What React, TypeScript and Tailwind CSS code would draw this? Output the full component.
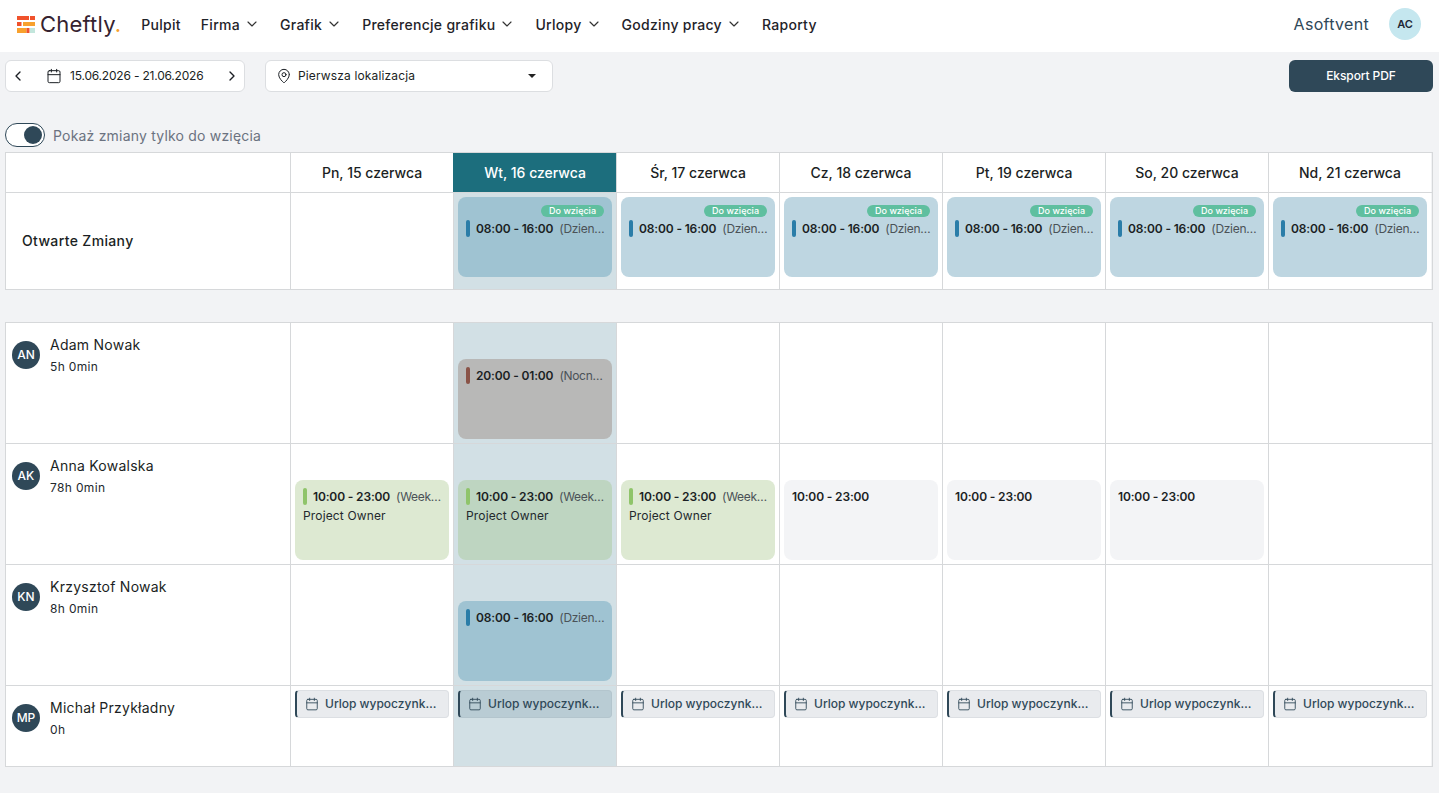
import { Calendar, ChevronDown, ChevronLeft, ChevronRight, MapPin } from 'lucide-react';
import type { ReactNode } from 'react';

const days = ['Pn, 15 czerwca', 'Wt, 16 czerwca', 'Śr, 17 czerwca', 'Cz, 18 czerwca', 'Pt, 19 czerwca', 'So, 20 czerwca', 'Nd, 21 czerwca'];

function NavItem({ label, menu }: { label: string; menu?: boolean }) {
  return (
    <div className="flex items-center gap-1 text-[14px] font-medium text-[#1f2329] tracking-[0.28px] whitespace-nowrap">
      {label}
      {menu && <ChevronDown className="w-4 h-4 text-[#333]" strokeWidth={1.75} />}
    </div>
  );
}

function Logo() {
  return (
    <svg width="18" height="17" viewBox="0 0 18 17" className="shrink-0">
      <rect x="0" y="0" width="12" height="4" fill="#f0522c" />
      <rect x="13" y="0" width="5" height="4" fill="#f0522c" />
      <rect x="0" y="6" width="4.5" height="4" fill="#f0522c" />
      <rect x="6" y="6" width="12" height="4" fill="#f8a12d" />
      <rect x="0" y="12" width="9.5" height="5" fill="#f8a12d" />
      <rect x="9.5" y="12" width="3" height="5" fill="#f0522c" />
      <rect x="13" y="12" width="5" height="5" fill="#c3e6dc" />
    </svg>
  );
}

// kafelek zmiany w siatce
function Shift({ time, tag, role, bar, bg, badge }: { time: string; tag?: string; role?: string; bar?: string; bg: string; badge?: boolean }) {
  return (
    <div className={`${bg} h-[80px] rounded-lg px-2 pt-[8px] flex flex-col`}>
      {badge && (
        <div className="self-end h-3 mb-[3px] px-2 rounded-full bg-[#5fbf9f] text-white text-[9px] leading-3 font-medium whitespace-nowrap">Do wzięcia</div>
      )}
      <div className="flex items-center h-[17px] text-[12px]">
        {bar && <span className={`w-1 h-[17px] rounded-sm ${bar} mr-[6px] shrink-0`} />}
        <span className="font-semibold text-[#1b1f24] whitespace-nowrap tracking-[-0.15px]">{time}</span>
        {tag && <span className="ml-[6px] text-[#4b5257] whitespace-nowrap tracking-[-0.3px]">{tag}</span>}
      </div>
      {role && <div className="mt-[2px] text-[12px] leading-[17px] tracking-[0.15px] text-[#23282d]">{role}</div>}
    </div>
  );
}

function Leave({ today }: { today?: boolean }) {
  return (
    <div className={`h-7 flex items-center gap-[6px] pl-[8px] pr-2 rounded border border-l-2 border-l-[#2f4858] ${today ? 'bg-[#b9ccd4] border-[#b3c5cd]' : 'bg-[#e9ebee] border-[#dcdfe3]'}`}>
      <Calendar className="w-[14px] h-[14px] text-[#2f4858] shrink-0" strokeWidth={1.5} />
      <span className="text-[12px] font-medium text-[#2f4858] whitespace-nowrap">Urlop wypoczynk…</span>
    </div>
  );
}

function Cell({ today, children }: { today?: boolean; children?: ReactNode }) {
  return <div className={`border-l border-[#d6d8da] p-1 ${today ? 'bg-[#d2e0e5]' : 'bg-white'}`}>{children}</div>;
}

function Person({ initials, name, hours }: { initials: string; name: string; hours: string }) {
  return (
    <div className="flex items-start gap-[10px] pl-[6px] pt-[11px] bg-white">
      <div className="w-7 h-7 mt-[7px] rounded-full bg-[#2f4858] text-white text-[12px] font-medium flex items-center justify-center shrink-0">{initials}</div>
      <div>
        <div className="text-[14px] leading-[21px] tracking-[0.25px] text-[#1b1f24]">{name}</div>
        <div className="mt-[3px] text-[12px] leading-[18px] tracking-[0.35px] text-[#23282d]">{hours}</div>
      </div>
    </div>
  );
}

const rowGrid = 'grid grid-cols-[284px_repeat(7,163px)]';

export default function App() {
  const open = { time: '08:00 - 16:00', tag: '(Dzien…', bar: 'bg-[#2a7da8]', badge: true };
  const week = { time: '10:00 - 23:00', tag: '(Week…', role: 'Project Owner', bar: 'bg-[#8fc46a]' };

  return (
    <div className="font-['Inter','Noto_Sans',sans-serif] min-h-[793px] bg-[#f2f3f5] text-[#1b1f24]">
      <header className="h-[52px] bg-white flex items-center justify-between pl-[17px] pr-[18px] pb-1">
        <div className="flex items-center">
          <Logo />
          <span className="ml-[5px] text-[22px] tracking-[0.2px] text-[#35222f] leading-none">Cheftly<span className="text-[#f8a12d]">.</span></span>
          <nav className="flex items-center gap-[20px] ml-[20px]">
            <NavItem label="Pulpit" />
            <NavItem label="Firma" menu />
            <NavItem label="Grafik" menu />
            <NavItem label="Preferencje grafiku" menu />
            <NavItem label="Urlopy" menu />
            <NavItem label="Godziny pracy" menu />
            <NavItem label="Raporty" />
          </nav>
        </div>
        <div className="flex items-center gap-5">
          <span className="text-[16px] tracking-[0.3px] text-[#2f4858]">Asoftvent</span>
          <div className="w-8 h-8 rounded-full bg-[#c5e7ef] flex items-center justify-center text-[11px] font-semibold text-[#1f2937]">AC</div>
        </div>
      </header>

      <div className="flex items-center justify-between pl-[5px] pr-[6px] pt-2">
        <div className="flex items-center gap-5">
          <div className="w-[240px] h-8 flex items-center bg-white border border-[#dcdee1] rounded-md px-1 text-[12px]">
            <ChevronLeft className="w-4 h-4" strokeWidth={2} />
            <Calendar className="w-4 h-4 ml-5" strokeWidth={1.5} />
            <span className="ml-2 tracking-[-0.2px] whitespace-nowrap">15.06.2026 - 21.06.2026</span>
            <ChevronRight className="w-4 h-4 ml-auto" strokeWidth={2} />
          </div>
          <div className="w-[288px] h-8 flex items-center bg-white border border-[#dcdee1] rounded-md pl-[10px] pr-4 text-[12px]">
            <MapPin className="w-4 h-4" strokeWidth={1.5} />
            <span className="ml-[6px] tracking-[0.15px]">Pierwsza lokalizacja</span>
            <span className="ml-auto w-0 h-0 border-x-[4px] border-x-transparent border-t-[4px] border-t-[#222]" />
          </div>
        </div>
        <button className="w-[144px] h-8 rounded-md bg-[#2f4858] text-white text-[12px] font-medium tracking-[-0.1px]">Eksport PDF</button>
      </div>

      <div className="flex items-center gap-2 pl-[5px] mt-[31px] h-6">
        <div className="w-10 h-6 rounded-full bg-white border border-[#2f4858] flex items-center justify-end pr-[2px]">
          <span className="w-[18px] h-[18px] rounded-full bg-[#2f4858]" />
        </div>
        <span className="text-[14px] tracking-[0.2px] text-[#6b7280]">Pokaż zmiany tylko do wzięcia</span>
      </div>

      <div className="ml-[5px] mt-[5px] border border-[#d6d8da] w-[1428px]">
        <div className={`${rowGrid} h-[40px] border-b border-[#d6d8da]`}>
          <div className="bg-white" />
          {days.map((d, i) => (
            <div key={d} className={`flex items-center justify-center text-[14px] font-medium border-l ${i === 1 ? 'bg-[#1c6e7d] text-white border-[#1c6e7d]' : 'bg-white text-[#1b1f24] border-[#d6d8da]'}`}>{d}</div>
          ))}
        </div>
        <div className={`${rowGrid} h-[96px]`}>
          <div className="bg-white flex items-center pl-4 pb-[2px] text-[14px] font-medium tracking-[0.35px]">Otwarte Zmiany</div>
          <Cell />
          {days.slice(1).map((d, i) => (
            <Cell key={d} today={i === 0}>
              <Shift {...open} bg={i === 0 ? 'bg-[#9fc3d2]' : 'bg-[#bed6e1]'} />
            </Cell>
          ))}
        </div>
      </div>

      <div className="ml-[5px] mt-[32px] border border-[#d6d8da] w-[1428px] divide-y divide-[#d6d8da]">
        <div className={`${rowGrid} h-[121px]`}>
          <Person initials="AN" name="Adam Nowak" hours="5h 0min" />
          <Cell />
          <Cell today>
            <div className="pt-8"><Shift time="20:00 - 01:00" tag="(Nocn…" bar="bg-[#8a5347]" bg="bg-[#b8b8b7]" /></div>
          </Cell>
          <Cell /><Cell /><Cell /><Cell /><Cell />
        </div>
        <div className={`${rowGrid} h-[121px]`}>
          <Person initials="AK" name="Anna Kowalska" hours="78h 0min" />
          <Cell><div className="pt-8"><Shift {...week} bg="bg-[#dde9d2]" /></div></Cell>
          <Cell today><div className="pt-8"><Shift {...week} bg="bg-[#bed5c1]" /></div></Cell>
          <Cell><div className="pt-8"><Shift {...week} bg="bg-[#dde9d2]" /></div></Cell>
          <Cell><div className="pt-8"><Shift time="10:00 - 23:00" bg="bg-[#f3f4f6]" /></div></Cell>
          <Cell><div className="pt-8"><Shift time="10:00 - 23:00" bg="bg-[#f3f4f6]" /></div></Cell>
          <Cell><div className="pt-8"><Shift time="10:00 - 23:00" bg="bg-[#f3f4f6]" /></div></Cell>
          <Cell />
        </div>
        <div className={`${rowGrid} h-[121px]`}>
          <Person initials="KN" name="Krzysztof Nowak" hours="8h 0min" />
          <Cell />
          <Cell today><div className="pt-8"><Shift time="08:00 - 16:00" tag="(Dzien…" bar="bg-[#2a7da8]" bg="bg-[#9fc3d2]" /></div></Cell>
          <Cell /><Cell /><Cell /><Cell /><Cell />
        </div>
        <div className={`${rowGrid} h-[80px]`}>
          <Person initials="MP" name="Michał Przykładny" hours="0h" />
          <Cell><Leave /></Cell>
          <Cell today><Leave today /></Cell>
          <Cell><Leave /></Cell>
          <Cell><Leave /></Cell>
          <Cell><Leave /></Cell>
          <Cell><Leave /></Cell>
          <Cell><Leave /></Cell>
        </div>
      </div>
    </div>
  );
}
